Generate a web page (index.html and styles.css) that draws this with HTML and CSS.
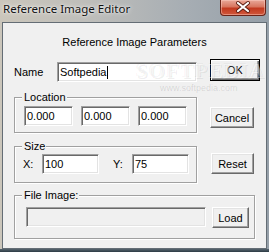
FILE: index.html
```html
<!DOCTYPE html>
<html lang="en">
<head>
  <meta charset="UTF-8">
  <title>Reference Image Editor</title>
  <link rel="stylesheet" href="styles.css">
</head>
<body>
  <div class="window">
    <div class="titlebar">
      <span class="title">Reference Image Editor</span>
      <span class="close-btn">
        <svg width="44" height="14" viewBox="0 0 44 14">
          <path d="M17 3 L27 11 M27 3 L17 11" stroke="#5a1d12" stroke-width="4" stroke-linecap="round"/>
          <path d="M17 3 L27 11 M27 3 L17 11" stroke="#fff" stroke-width="2.2" stroke-linecap="round"/>
        </svg>
      </span>
    </div>

    <div class="client">
      <div class="heading">Reference Image Parameters</div>

      <div class="form">
        <div class="row row-name">
          <span class="lbl lbl-name">Name</span>
          <div class="edit edit-name">Softpedia<span class="caret"></span></div>
          <div class="btn btn-default btn-ok">OK</div>
        </div>

        <div class="row row-loc">
          <fieldset class="group group-loc">
            <legend>Location</legend>
            <div class="group-body">
              <div class="edit edit-loc">0.000</div>
              <div class="edit edit-loc">0.000</div>
              <div class="edit edit-loc">0.000</div>
            </div>
          </fieldset>
          <div class="btn btn-cancel">Cancel</div>
        </div>

        <div class="row row-size">
          <fieldset class="group group-size">
            <legend>Size</legend>
            <div class="group-body">
              <span class="lbl lbl-xy">X:</span>
              <div class="edit edit-size">100</div>
              <span class="lbl lbl-xy lbl-y">Y:</span>
              <div class="edit edit-size">75</div>
            </div>
          </fieldset>
          <div class="btn btn-reset">Reset</div>
        </div>

        <div class="row row-file">
          <fieldset class="group group-file">
            <legend>File Image:</legend>
            <div class="group-body">
              <div class="edit edit-file disabled"></div>
              <div class="btn btn-load">Load</div>
            </div>
          </fieldset>
        </div>
      </div>
    </div>
    <div class="frame-bottom"></div>

    <!-- watermark -->
    <span class="wm wm-big">SOFTPEDIA</span>
    <span class="wm wm-url">www.softpedia.com</span>
  </div>
</body>
</html>
```

FILE: styles.css
```css
* {
  box-sizing: border-box;
}

body {
  margin: 0;
  font-family: "Liberation Sans", Arial, sans-serif;
  font-size: 11px;
  color: #000;
}

.window {
  position: relative;
  width: 269px;
  height: 252px;
  overflow: hidden;
  background: linear-gradient(90deg, #cbc6bb 0%, #bdbdba 35%, #a6adb3 70%, #959fa8 100%);
}

.titlebar {
  height: 22px;
  display: flex;
  align-items: flex-start;
  padding-left: 3px;
}

.title {
  font-family: "Noto Sans", sans-serif;
  font-size: 11.5px;
  line-height: 18px;
  color: #111;
  text-shadow: 0 0 5px rgba(255, 255, 255, 0.9), 0 0 2px rgba(255, 255, 255, 0.8);
}

.close-btn {
  margin-left: auto;
  margin-right: 3px;
  width: 46px;
  height: 16px;
  border: 1px solid #6b2418;
  border-top: none;
  border-radius: 0 0 4px 4px;
  background: linear-gradient(180deg, #e9a899 0%, #d8765f 45%, #c2391f 55%, #d0583c 100%);
  box-shadow: inset 0 0 0 1px rgba(255, 210, 200, 0.45);
}

.close-btn svg {
  display: block;
}

.client {
  margin: 0 2px;
  height: 227px;
  border: 1px solid #646d75;
  background: #f0f0f0;
  padding-top: 13px;
}

.heading {
  text-align: center;
  line-height: 13px;
}

.form {
  padding-left: 11px;
}

.row {
  display: flex;
  align-items: flex-start;
}

.row-name {
  margin-top: 10px;
}

.row-loc {
  margin-top: 9px;
}

.row-size {
  margin-top: 7px;
}

.row-file {
  margin-top: 6px;
}

.lbl {
  line-height: 20px;
}

.lbl-name {
  width: 43px;
  margin-top: 3px;
}

/* sunken edit box */
.edit {
  height: 20px;
  line-height: 18px;
  padding: 0 2px;
  border: 1px solid;
  border-color: #a0a0a0 #fff #fff #a0a0a0;
  box-shadow: inset 1px 1px 0 #696969, inset -1px -1px 0 #e3e3e3;
  background: #fff;
  white-space: nowrap;
}

.edit.disabled {
  background: #f0f0f0;
}

.caret {
  display: inline-block;
  width: 1px;
  height: 13px;
  margin-left: 1px;
  background: #000;
  vertical-align: -3px;
}

.edit-name {
  width: 140px;
  margin-top: 3px;
}

/* raised push button */
.btn {
  display: flex;
  align-items: center;
  justify-content: center;
  border: 1px solid;
  border-color: #fff #696969 #696969 #fff;
  box-shadow: inset -1px -1px 0 #a0a0a0, inset 1px 1px 0 #e3e3e3;
  background: #f0f0f0;
}

.btn-default {
  border-color: #000;
  box-shadow: inset 1px 1px 0 #fff, inset -1px -1px 0 #696969, inset -2px -2px 0 #a0a0a0;
}

.btn-ok {
  width: 50px;
  height: 22px;
  margin-left: 13px;
}

.btn-cancel {
  width: 44px;
  height: 21px;
  margin-left: 13px;
  margin-top: 16px;
}

.btn-reset {
  width: 43px;
  height: 21px;
  margin-left: 14px;
  margin-top: 13px;
}

.btn-load {
  width: 37px;
  height: 21px;
  margin-left: 6px;
}

/* etched group box */
.group {
  margin: 0;
  min-width: 0;
  padding: 0 0 0 9px;
  border: 1px solid #a0a0a0;
  box-shadow: inset 1px 1px 0 #fff, 1px 1px 0 #fff;
}

.group legend {
  margin-left: -2px;
  padding: 0 1px 0 2px;
  line-height: 13px;
  background: #f0f0f0;
}

.group-body {
  display: flex;
  align-items: flex-start;
}

.group-loc {
  width: 183px;
  padding-top: 2px;
  padding-bottom: 6px;
}

.group-loc .group-body {
  gap: 8px;
}

.edit-loc {
  width: 49px;
}

.group-size {
  width: 183px;
  padding-top: 1px;
  padding-bottom: 8px;
}

.lbl-xy {
  width: 19px;
  margin-left: -1px;
}

.lbl-y {
  margin-left: 14px;
}

.edit-size {
  width: 57px;
}

.group-file {
  width: 241px;
  padding-top: 5px;
  padding-bottom: 10px;
}

.edit-file {
  width: 180px;
  margin-left: 2px;
}

.frame-bottom {
  height: 3px;
  background: linear-gradient(180deg, #56646e, #2c3a44);
}

/* softpedia watermark */
.wm {
  position: absolute;
  white-space: nowrap;
  pointer-events: none;
}

.wm-big {
  left: 136px;
  top: 61px;
  font-family: "Liberation Serif", serif;
  font-weight: bold;
  font-size: 21px;
  line-height: 20px;
  letter-spacing: 1px;
  color: rgba(255, 255, 255, 0.45);
  text-shadow: 1px 1px 0 rgba(0, 0, 0, 0.07), -1px -1px 0 rgba(0, 0, 0, 0.04);
}

.wm-url {
  left: 160px;
  top: 84px;
  font-size: 9px;
  line-height: 9px;
  color: rgba(0, 0, 0, 0.12);
}
```
